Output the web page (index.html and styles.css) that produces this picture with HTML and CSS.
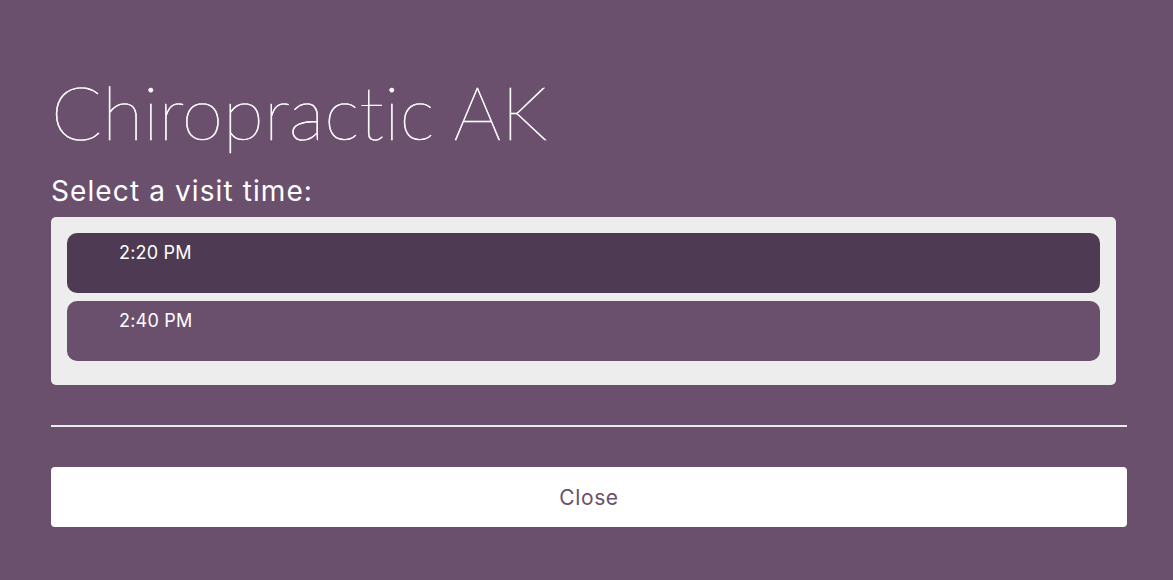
FILE: index.html
```html
<!DOCTYPE html>
<html>
<head>
<meta charset="utf-8">
<link rel="stylesheet" href="styles.css">
</head>
<body>
<main class="modal">
  <h1 class="title">Chiropractic AK</h1>
  <h2 class="subtitle">Select a visit time:</h2>
  <div class="slots">
    <button class="slot slot-active">2:20 PM</button>
    <button class="slot">2:40 PM</button>
  </div>
  <hr class="divider">
  <button class="close-btn">Close</button>
</main>
</body>
</html>
```
FILE: styles.css
```css
html, body {
  margin: 0;
  padding: 0;
  background: #6b506e;
}
body {
  font-family: "Inter", "Liberation Sans", sans-serif;
  color: #fff;
}
.modal {
  padding: 66px 46px 0 51px;
  display: flex;
  flex-direction: column;
}
.title {
  margin: 0;
  font-family: "Lato", "Liberation Sans", sans-serif;
  font-weight: 100;
  font-size: 75px;
  line-height: 90px;
  font-variant-ligatures: none;
  -webkit-text-stroke: 0.6px #fff;
}
.subtitle {
  margin: 18px 0 0 0;
  font-weight: 400;
  font-size: 28px;
  line-height: 34px;
  letter-spacing: 1.1px;
}
.slots {
  margin-top: 9px;
  width: 1065px;
  box-sizing: border-box;
  background: #ecedec;
  border-radius: 5px;
  padding: 16px 16px 24px 16px;
  display: flex;
  flex-direction: column;
  gap: 8px;
}
.slot {
  height: 60px;
  border: 0;
  border-radius: 10px;
  background: #6b506e;
  color: #fff;
  font-family: inherit;
  font-size: 18px;
  letter-spacing: 0.2px;
  text-align: left;
  padding: 9px 0 0 52px;
  display: flex;
  align-items: flex-start;
}
.slot-active {
  background: #4e3a52;
}
.divider {
  margin: 40px 0 0 0;
  border: 0;
  height: 2px;
  background: #ececec;
}
.close-btn {
  margin-top: 40px;
  height: 60px;
  border: 0;
  border-radius: 4px;
  background: #fff;
  color: #6b506e;
  font-family: inherit;
  font-size: 21px;
  letter-spacing: 0.6px;
}
```
